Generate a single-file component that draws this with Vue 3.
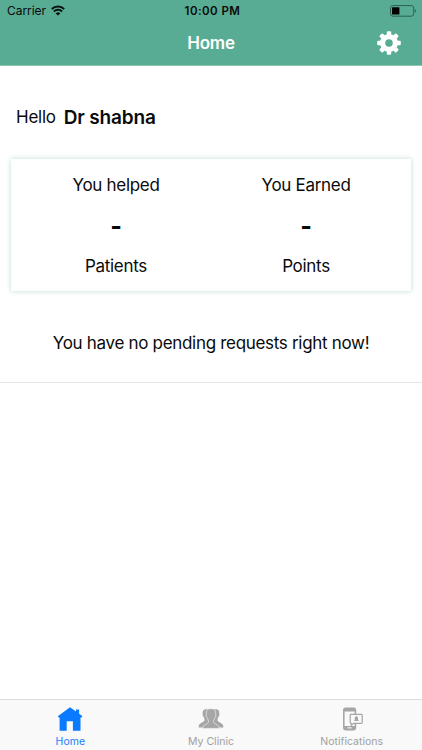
<template>
  <div class="home-page">
    <header class="header">
      <div class="status-bar">
        <div class="carrier">
          <span class="carrier-name">Carrier</span>
          <svg class="wifi" viewBox="0 0 14 11" width="14" height="11">
            <path d="M0.8 4a8.8 8.8 0 0 1 12.4 0" />
            <path d="M2.9 6.5a5.8 5.8 0 0 1 8.2 0" />
            <path class="dot" d="M7 10.5L4.7 8.4a3.3 3.3 0 0 1 4.600 0z" />
          </svg>
        </div>
        <span class="time">{{ time }}</span>
        <svg class="battery" viewBox="0 0 27 12" width="27" height="12">
          <rect class="shell" x="0.5" y="0.6" width="23.2" height="10.6" rx="2.4" />
          <rect x="2" y="2.2" width="7.4" height="7.4" rx="0.6" />
          <path class="cap" d="M24.8 4c1.5.4 1.5 3.4 0 3.8z" />
        </svg>
      </div>
      <div class="nav-bar">
        <span></span>
        <h1>Home</h1>
        <button class="settings" aria-label="Settings">
          <svg viewBox="-12 -12 24 24" width="24" height="24">
            <rect v-for="a in [0, 45, 90, 135]" :key="a" x="-2.2" y="-11.8" width="4.4" height="23.6" rx="1" :transform="`rotate(${a})`" />
            <circle r="9" />
            <circle class="hole" r="3.8" />
          </svg>
        </button>
      </div>
    </header>

    <main>
      <p class="greeting">Hello <strong>{{ doctor }}</strong></p>
      <section class="stats">
        <div v-for="s in stats" :key="s.unit" class="stat">
          <span class="label">{{ s.label }}</span>
          <span class="value">{{ s.value }}</span>
          <span class="unit">{{ s.unit }}</span>
        </div>
      </section>
      <p class="pending">You have no pending requests right now!</p>
    </main>

    <nav class="tab-bar">
      <a class="tab active">
        <svg viewBox="0 0 26 24" width="26" height="24">
          <path d="M13 0.3L0.8 9.3l1 1.1H2.6V23.8H9.7V14.3h6.200v9.500h7.600V10.400h1.100l.8-1.100-3.300-2.600V2.400h-3.100v2z" />
        </svg>
        <span>Home</span>
      </a>
      <a class="tab">
        <svg viewBox="0 0 26 24" width="26" height="24">
          <path d="M8.700 2.300C5.100 2 4.400 4.500 4.800 6.900c-.7.300-.2 2 .5 2.300.2 1 .7 1.700 1.100 2.300v2.200C5.700 15.400.9 15.700.6 19.700v.9h6l8-6V2.300z" />
          <path d="M17.300 2.300c3.600-.3 4.300 2.200 3.900 4.600.7.300.2 2-.5 2.300-.2 1-.7 1.700-1.100 2.300v2.200c.7 1.700 5.500 2 5.800 6v.9h-6l-8-6V2.300z" />
          <path class="front" d="M13 1.700c-3.900 0-5.100 2.300-4.500 5.900-.8.200-.4 2.500.6 2.900.3 1.300.8 2 1.300 2.600v2.300c-.8 1.900-5.600 2.100-6.100 6h17.400c-.5-3.900-5.300-4.100-6.100-6v-2.300c.5-.6 1-1.300 1.300-2.600 1-.4 1.400-2.700.6-2.900C18.100 4 16.900 1.700 13 1.700z" />
        </svg>
        <span>My Clinic</span>
      </a>
      <a class="tab">
        <svg class="phone" viewBox="0 0 22 24" width="22" height="24">
          <path class="line" d="M14.400 7V3c0-1-.6-1.600-1.600-1.600H4.400C3.400 1.400 2.800 2 2.800 3v18c0 1 .6 1.600 1.600 1.600h8.400c1 0 1.600-.6 1.600-1.600v-4" />
          <path d="M2.800 4.600V2.800L4 1.400h9.200l1.200 1.400v1.800zM2.800 19h11.600v2.500l-1.200 1.100H4l-1.200-1.100z" />
          <rect class="slot" x="6.600" y="20.300" width="4" height="1.100" />
          <path class="bubble" d="M10 7.400h10.400c.5 0 .8.300.8.800v7.400c0 .5-.3.800-.8.800h-7.900l-2.200 2v-2H10c-.5 0-.8-.3-.8-.8V8.200c0-.5.3-.8.8-.8z" />
          <path d="M13.100 14v-.6l.7-.7v-1.500c0-.9.500-1.500 1.100-1.700.1-.6.900-.6 1 0 .6.200 1.100.8 1.100 1.700v1.500l.7.700v.6z" />
        </svg>
        <span>Notifications</span>
      </a>
    </nav>
  </div>
</template>

<script setup>
import { ref } from 'vue';

const time = ref('10:00 PM');
const doctor = ref('Dr shabna');
const stats = ref([
  { label: 'You helped', value: '-', unit: 'Patients' },
  { label: 'You Earned', value: '-', unit: 'Points' },
]);
</script>

<style>
body {
  margin: 0;
  background: #fff;
}
</style>

<style scoped>
.home-page {
  display: flex;
  flex-direction: column;
  height: 750px;
  font-family: Inter, 'Liberation Sans', sans-serif;
  color: #0a0a0a;
  background: #fff;
}
.header {
  height: 65px;
  background: #58ac94;
  border-bottom: 1px solid #8fc5b4;
}
.status-bar {
  display: grid;
  grid-template-columns: 1fr auto 1fr;
  align-items: center;
  height: 21px;
  padding: 0 5px 0 7px;
  font-size: 12px;
}
.carrier {
  display: flex;
  align-items: center;
  gap: 5px;
  letter-spacing: -0.05px;
}
.wifi path {
  fill: none;
  stroke: #07110e;
  stroke-width: 1.9;
}
.wifi .dot {
  fill: #07110e;
  stroke: none;
}
.time {
  padding-left: 1px;
  font-weight: 600;
  font-size: 11.5px;
  letter-spacing: 0.45px;
}
.battery {
  justify-self: end;
}
.battery .shell {
  fill: none;
  stroke: #2c6152;
}
.battery .cap {
  fill: #2c6152;
}
.nav-bar {
  display: grid;
  grid-template-columns: 1fr auto 1fr;
  align-items: center;
  height: 44px;
  padding: 0 21px;
}
.nav-bar h1 {
  margin: 0;
  color: #fff;
  font-size: 17px;
  font-weight: 600;
  letter-spacing: -0.2px;
}
.settings {
  display: flex;
  justify-self: end;
  padding: 0;
  border: none;
  background: none;
}
.settings svg {
  fill: #fff;
}
.settings .hole {
  fill: #58ac94;
}
main {
  flex: 1;
}
.greeting {
  display: flex;
  align-items: center;
  gap: 8px;
  height: 24px;
  margin: 39px 16px 30px;
  font-size: 17px;
  letter-spacing: -0.25px;
}
.greeting strong {
  font-size: 19px;
  font-weight: 600;
  letter-spacing: -0.15px;
}
.stats {
  display: grid;
  grid-template-columns: 1fr 1fr;
  height: 132px;
  margin: 0 11px;
  box-sizing: border-box;
  padding: 14px 10px 0;
  box-shadow: 0 0 5px rgba(88, 172, 148, 0.4);
}
.stat {
  display: flex;
  flex-direction: column;
  align-items: center;
  font-size: 17px;
  letter-spacing: -0.3px;
}
.label,
.unit {
  line-height: 24px;
}
.value {
  height: 57px;
  line-height: 59px;
  font-size: 25px;
  font-weight: 700;
}
.pending {
  height: 91px;
  margin: 0;
  line-height: 104px;
  font-size: 17px;
  letter-spacing: -0.31px;
  text-align: center;
  border-bottom: 1px solid #e4e4e4;
}
.tab-bar {
  display: grid;
  grid-template-columns: repeat(3, 1fr);
  height: 50px;
  background: #f9f9f9;
  border-top: 1px solid #dcdcdc;
}
.tab {
  display: flex;
  flex-direction: column;
  align-items: center;
  padding-top: 7px;
  color: #a0a0a0;
  fill: #a6a6a6;
  font-size: 10.5px;
}
.tab span {
  margin-top: 4px;
  line-height: 14px;
}
.tab.active {
  color: #147efb;
  fill: #0a7aff;
}
.front {
  stroke: #f9f9f9;
  stroke-width: 0.6;
}
.phone .line {
  fill: none;
  stroke: #a6a6a6;
  stroke-width: 1.6;
}
.phone .slot {
  fill: #f9f9f9;
}
.phone .bubble {
  fill: #f9f9f9;
  stroke: #a6a6a6;
  stroke-width: 1.2;
}
</style>
